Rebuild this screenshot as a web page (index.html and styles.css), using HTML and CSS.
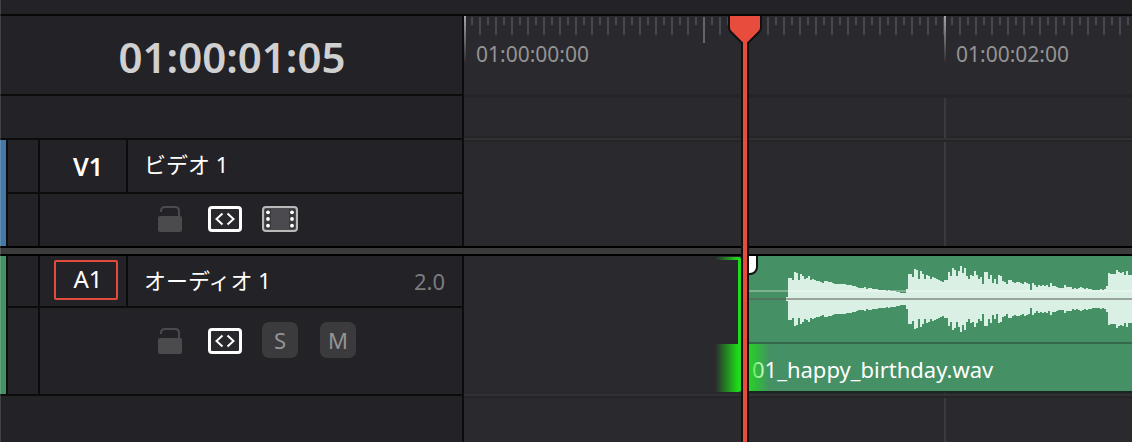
FILE: index.html
```html
<!DOCTYPE html>
<html lang="ja">
<head>
    <meta charset="UTF-8">
    <meta name="viewport" content="width=device-width, initial-scale=1.0">
    <title>Timeline</title>
    <link rel="stylesheet" href="styles.css">
</head>
<body>
    <svg class="sprite" width="0" height="0" aria-hidden="true">
        <symbol id="icon-lock" viewBox="0 0 24 26">
            <rect x="0" y="10" width="24" height="16" rx="2" fill="#4b4b4d"/>
            <path d="M3 6V5Q3 1 7 1H17Q21 1 21 5V11" fill="none" stroke="#4b4b4d" stroke-width="2"/>
        </symbol>
        <symbol id="icon-link" viewBox="0 0 34 26">
            <rect x="1.5" y="1.5" width="31" height="23" rx="2.5" fill="#29282c" stroke="#fff" stroke-width="3"/>
            <path d="M14.5 7.5L8.5 13L14.5 18.5M19.5 7.5L25.5 13L19.5 18.5" fill="none" stroke="#fff" stroke-width="2"/>
        </symbol>
        <symbol id="icon-film" viewBox="0 0 36 26">
            <rect x="1" y="1" width="34" height="24" rx="3" fill="#4b4a4e" stroke="#b9b9ba" stroke-width="2"/>
            <path d="M3 3H9V23H3ZM27 3H33V23H27Z" fill="#38373b"/>
            <g fill="#fff">
                <circle cx="6" cy="6.3" r="1.9"/><circle cx="6" cy="13" r="1.9"/><circle cx="6" cy="19.7" r="1.9"/>
                <circle cx="30" cy="6.3" r="1.9"/><circle cx="30" cy="13" r="1.9"/><circle cx="30" cy="19.7" r="1.9"/>
            </g>
        </symbol>
    </svg>

    <div class="app">
        <header class="topbar"></header>

        <div class="row">
            <div class="panel timecode">01:00:01:05</div>
            <div class="ruler">
                <div class="mark">01:00:00:00</div>
                <div class="mark">01:00:02:00</div>
            </div>
        </div>

        <div class="row gap">
            <div class="panel"></div>
            <div class="lane"></div>
        </div>

        <div class="row">
            <section class="panel track video">
                <div class="color"></div>
                <div class="handle"><span></span><span></span></div>
                <div class="track-body">
                    <div class="track-head">
                        <div class="track-id"><button type="button" class="dest bold">V1</button></div>
                        <div class="track-name">ビデオ 1</div>
                    </div>
                    <div class="controls">
                        <button type="button" aria-label="Lock"><svg width="24" height="26"><use href="#icon-lock"/></svg></button>
                        <button type="button" aria-label="Auto select"><svg width="34" height="26"><use href="#icon-link"/></svg></button>
                        <button type="button" aria-label="Video enable"><svg width="36" height="26"><use href="#icon-film"/></svg></button>
                    </div>
                </div>
            </section>
            <div class="lane first"></div>
        </div>

        <div class="divider"></div>

        <div class="row">
            <section class="panel track audio">
                <div class="color"></div>
                <div class="handle"><span></span><span></span></div>
                <div class="track-body">
                    <div class="track-head">
                        <div class="track-id"><button type="button" class="dest active">A1</button></div>
                        <div class="track-name">オーディオ 1</div>
                        <div class="channels">2.0</div>
                    </div>
                    <div class="controls">
                        <button type="button" aria-label="Lock"><svg width="24" height="26"><use href="#icon-lock"/></svg></button>
                        <button type="button" aria-label="Auto select"><svg width="34" height="26"><use href="#icon-link"/></svg></button>
                        <button type="button" class="toggle">S</button>
                        <button type="button" class="toggle mute">M</button>
                    </div>
                </div>
            </section>
            <div class="lane last">
                <div class="clip">
                    <svg class="wave" width="384" height="86" aria-hidden="true">
                        <path id="wave" fill="#daf0e4"/>
                    </svg>
                    <div class="clip-name">01_happy_birthday.wav</div>
                    <div class="fade-handle"></div>
                </div>
                <div class="edit-point"></div>
            </div>
        </div>

        <div class="row rest">
            <div class="panel"></div>
            <div class="lane"></div>
        </div>

        <div class="playhead">
            <svg width="34" height="28" aria-hidden="true">
                <path d="M1 -2H33V12Q33 14 31 16L20 27H14L3 16Q1 14 1 12Z" fill="#e84c3d" stroke="#111" stroke-width="2"/>
            </svg>
        </div>
    </div>

    <script src="script.js"></script>
</body>
</html>
```
FILE: styles.css
```css
*,
*::before,
*::after {
    box-sizing: border-box;
}

body {
    margin: 0;
    background-color: #232226;
    color: #fff;
    font-family: "Noto Sans", "Noto Sans CJK JP", sans-serif;
    font-size: 22px;
    line-height: 30px;
}

button {
    padding: 0;
    border: none;
    background: none;
    color: inherit;
    font: inherit;
    cursor: pointer;
}

svg {
    display: block;
}

.sprite {
    position: absolute;
}

.app {
    position: relative;
    display: flex;
    flex-direction: column;
    min-height: 100vh;
    overflow: hidden;
}

.app::after {
    content: "";
    position: absolute;
    top: 0;
    bottom: 0;
    left: 0;
    width: 1px;
    background-color: rgba(255, 255, 255, 0.15);
}

.topbar {
    height: 16px;
    border-bottom: 2px solid #080808;
}

.row {
    display: grid;
    grid-template-columns: 464px 1fr;
}

.panel {
    border-right: 2px solid #0c0c0d;
    border-bottom: 2px solid #0c0c0d;
}

.timecode {
    padding: 11px 0 7px 2px;
    text-align: center;
    font-size: 42px;
    font-weight: 600;
    line-height: 60px;
    color: #d0d0d1;
}

/* ruler */
.ruler {
    display: flex;
    min-width: 0;
    overflow: hidden;
    background-color: #2a292e;
    border-bottom: 2px solid #252527;
}

.mark {
    position: relative;
    flex: none;
    width: 480px;
    padding: 23px 12px 0;
    font-size: 21px;
    color: #949494;
    background-image:
        linear-gradient(#626468, #626468),
        repeating-linear-gradient(90deg, #45484d 0 1px, transparent 1px 15px, #45484d 15px 16px),
        repeating-linear-gradient(90deg, transparent 0 7px, #45484d 7px 9px, transparent 9px 16px);
    background-size: 2px 26px, 100% 18px, 100% 8px;
    background-position: 239px 1px, 0 1px, 0 1px;
    background-repeat: no-repeat;
}

.mark::before {
    content: "";
    position: absolute;
    top: 0;
    left: 0;
    width: 2px;
    height: 48px;
    background: linear-gradient(#a5a5a6, #2a292e);
}

/* lanes */
.lane {
    position: relative;
    min-width: 0;
    background-color: #2a292e;
}

.lane::before {
    content: "";
    position: absolute;
    top: 0;
    bottom: 0;
    left: 480px;
    width: 2px;
    background-color: #3a393e;
}

.gap .panel {
    height: 44px;
}

.gap .lane {
    border-top: 2px solid #252527;
    border-bottom: 2px solid #313135;
    box-shadow: inset 0 -2px #252528;
}

.lane.first {
    border-top: 2px solid #252528;
}

.lane.last {
    border-bottom: 2px solid #313135;
}

.rest {
    flex: 1;
}

.rest .panel {
    border-bottom: none;
}

.rest .lane {
    border-top: 2px solid #252528;
}

/* covers the bottom border of the row above */
.divider {
    position: relative;
    height: 10px;
    margin-top: -2px;
    background-color: #3b3b3b;
    border-top: 2px solid #000;
    border-bottom: 2px solid #000;
}

/* track headers */
.track {
    display: flex;
}

.color {
    width: 8px;
    border-right: 2px solid #0c0c0d;
}

.video .color {
    background-color: #4678a5;
}

.audio .color {
    background-color: #459064;
}

.handle {
    display: flex;
    flex-direction: column;
    width: 32px;
    border-right: 2px solid #0c0c0d;
}

.handle span:first-child {
    height: 54px;
    border-bottom: 2px solid #0c0c0d;
}

.audio .handle span:first-child {
    height: 52px;
}

.track-body {
    flex: 1;
}

.track-head {
    display: flex;
    height: 54px;
    border-bottom: 2px solid #0c0c0d;
}

.audio .track-head {
    height: 52px;
}

.track-id {
    width: 88px;
    padding: 6px 8px 0 14px;
    border-right: 2px solid #0c0c0d;
}

.audio .track-id {
    padding-top: 4px;
}

.dest {
    width: 64px;
    height: 40px;
    padding: 0 0 2px 4px;
    font-size: 24px;
    line-height: 34px;
    border: 2px solid transparent;
    border-radius: 2px;
}

.dest.bold {
    padding-bottom: 0;
    font-size: 25px;
    font-weight: 600;
}

.dest.active {
    border-color: #e24b3d;
}

.track-name {
    flex: 1;
    padding: 9px 0 0 16px;
}

.channels {
    padding: 10px 17px 0 0;
    color: #7c7c7e;
}

.controls {
    display: flex;
    align-items: center;
    height: 52px;
    padding: 0 0 2px 118px;
}

.controls button {
    margin-right: 26px;
}

.controls button + button {
    margin-right: 20px;
}

.audio .controls {
    height: 86px;
    padding-bottom: 20px;
}

.controls .toggle {
    width: 36px;
    height: 36px;
    margin-top: -2px;
    border-radius: 7px;
    background-color: #3b3b3d;
    color: #949494;
    line-height: 36px;
}

.controls .toggle.mute {
    margin-left: 2px;
}

/* clip */
.clip {
    position: relative;
    height: 137px;
    margin-left: 284px;
    overflow: hidden;
    background-color: #459064;
    border-bottom: 2px solid #1c2621;
}

.clip-name {
    height: 51px;
    padding: 10px 4px 0;
    border-top: 2px solid #35684b;
}

.clip::before {
    content: "";
    position: absolute;
    top: 34px;
    left: 0;
    right: 0;
    height: 2px;
    background-color: rgba(255, 255, 255, 0.3);
}

.clip::after {
    content: "";
    position: absolute;
    top: 42px;
    left: 0;
    right: 0;
    height: 2px;
    background-color: rgba(90, 90, 90, 0.5);
}

.clip-name::after {
    content: "";
    position: absolute;
    top: 88px;
    bottom: 0;
    left: 0;
    width: 22px;
    background: linear-gradient(90deg, rgba(30, 225, 25, 0.85), rgba(30, 225, 25, 0));
}

.fade-handle {
    position: absolute;
    top: -2px;
    left: -4px;
    width: 14px;
    height: 21px;
    background-color: #fff;
    border: 2px solid #111;
    border-radius: 0 0 8px 0;
}

/* selected edit point on the left side of the clip */
.edit-point {
    position: absolute;
    top: 1px;
    left: 251px;
    width: 27px;
    height: 135px;
    border-right: 4px solid #1fdc1a;
    border-radius: 0 4px 4px 0;
    background-image:
        linear-gradient(90deg, rgba(31, 220, 26, 0), #1fdc1a),
        linear-gradient(90deg, rgba(31, 220, 26, 0), #1fdc1a);
    background-size: 100% 3px, 100% 48px;
    background-position: 0 0, 0 100%;
    background-repeat: no-repeat;
}

/* playhead */
.playhead {
    position: absolute;
    top: 16px;
    bottom: 0;
    left: 728px;
    width: 34px;
}

.playhead::before {
    content: "";
    position: absolute;
    top: 20px;
    bottom: 0;
    left: 13px;
    width: 8px;
    background-color: #e84c3d;
    border: solid #111;
    border-width: 0 2px;
}

.playhead::after {
    content: "";
    position: absolute;
    top: 20px;
    bottom: 0;
    left: 15px;
    width: 4px;
    background-color: #e84c3d;
}

.playhead svg {
    position: relative;
}
```
FILE: script.js
```js
// half height of each 2px column
const peaks = [
    2, 21, 21, 19, 27, 26, 19, 25, 23, 20, 21, 23, 19, 20, 19, 18, 18, 17, 16, 18,
    18, 17, 17, 16, 15, 15, 15, 15, 15, 15, 14, 14, 14, 13, 13, 12, 11, 11, 11, 12,
    10, 11, 11, 10, 10, 10, 9, 9, 9, 9, 8, 9, 8, 8, 8, 7, 7, 6, 6, 6,
    10, 25, 25, 22, 30, 29, 20, 28, 25, 20, 24, 23, 20, 22, 21, 20, 19, 18, 17, 19,
    19, 27, 23, 31, 29, 23, 28, 33, 26, 31, 23, 20, 24, 23, 28, 24, 20, 22, 15, 27,
    27, 20, 24, 16, 20, 15, 24, 23, 18, 17, 15, 19, 19, 17, 16, 17, 17, 16, 15, 17,
    16, 15, 9, 16, 14, 12, 14, 13, 14, 13, 14, 12, 16, 13, 13, 12, 11, 11, 11, 14,
    12, 12, 12, 10, 11, 10, 11, 12, 11, 10, 11, 10, 10, 9, 9, 9, 9, 10, 9, 10,
    13, 26, 25, 25, 25, 29, 27, 26, 27, 24, 28, 24, 24
];

const start = 38;
const middle = 43;
let path = '';

peaks.forEach(function(peak, i) {
    path += `M${start + i * 2} ${middle - peak}h2v${peak * 2}h-2z`;
});

document.getElementById('wave').setAttribute('d', path);
```
